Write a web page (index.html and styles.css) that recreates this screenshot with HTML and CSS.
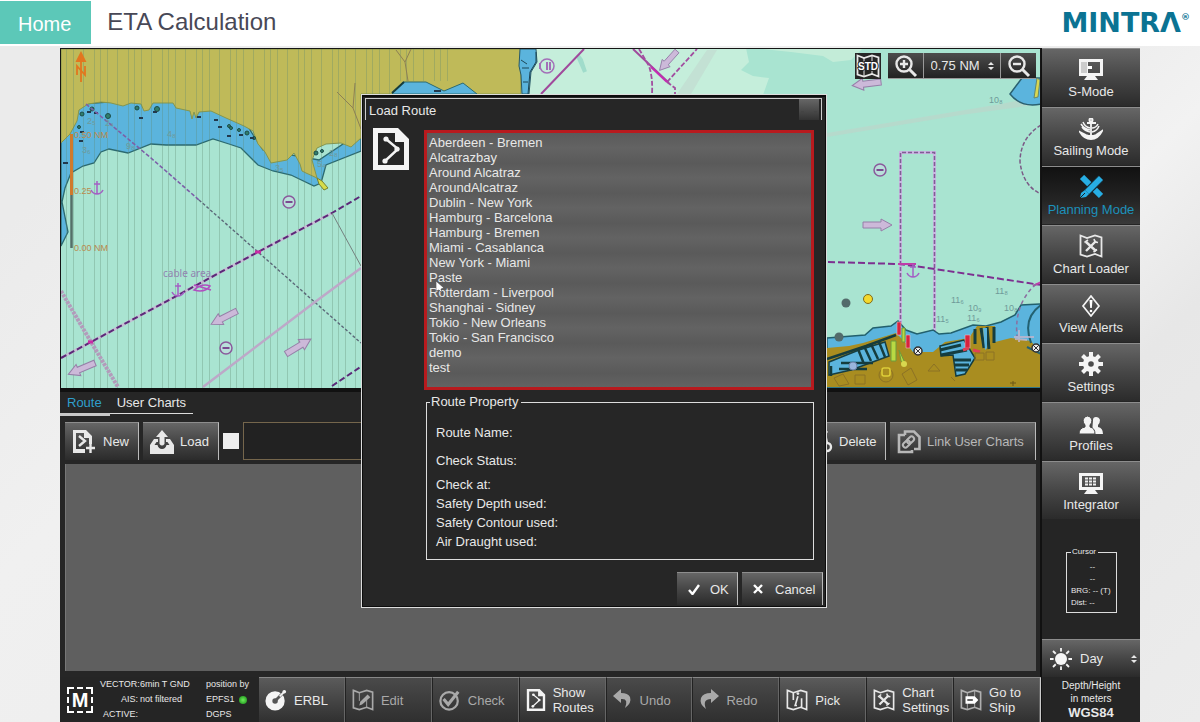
FILE: index.html
```html
<!DOCTYPE html>
<html lang="en">
<head>
<meta charset="utf-8">
<meta name="viewport" content="width=device-width, initial-scale=1">
<title>ETA Calculation</title>
<link rel="stylesheet" href="styles.css">
</head>
<body>
<svg class="defs" aria-hidden="true">
  <symbol id="i-sheet" viewBox="0 0 36 42">
    <path fill="#f4f4f4" fill-rule="evenodd" d="M0 0H25L36 11V42H0ZM5 5V37H31V14H22V5Z"/>
    <path d="M13 11L25 21L12 33" fill="none" stroke="#f4f4f4" stroke-width="2.4"/>
    <circle cx="13" cy="11" r="2.6" fill="#f4f4f4"/><circle cx="24" cy="21" r="2.6" fill="#f4f4f4"/><circle cx="12" cy="33" r="2.6" fill="#f4f4f4"/>
  </symbol>
  <symbol id="i-map" viewBox="0 0 24 24">
    <path d="M1.5 1.5L8 4L16 1.500L22.500 3.500V22.500L16 20L8 22.500L1.500 20.500Z" fill="none" stroke="currentColor" stroke-width="1.800"/>
  </symbol>
  <symbol id="i-tools" viewBox="0 0 24 24">
    <use href="#i-map"/>
    <path d="M7 17L17 7M7 8L17 17" stroke="currentColor" stroke-width="2.400"/>
    <path d="M5.500 8.500L9 6M15 5L16 8L19 8.500M14.500 18L18 15.500" fill="none" stroke="currentColor" stroke-width="1.600"/>
  </symbol>
</svg>

<header class="top">
  <a class="home" href="#">Home</a>
  <h1 class="title">ETA Calculation</h1>
  <div class="brand">MINTRΛ<sup>®</sup></div>
</header>

<main class="app">
  <div class="work">
    <section class="map">
      <svg class="chart" viewBox="60 49 980 339" preserveAspectRatio="xMinYMin slice" role="img" aria-label="Nautical chart">
        <defs>
          <pattern id="lines" width="34" height="40" patternUnits="userSpaceOnUse">
            <path d="M4.500 0V40M14.500 0V40M25.500 0V40M31.500 0V40" stroke="#5d8a72" stroke-opacity=".32"/>
          </pattern>
          <g id="arrow"><path d="M0-3H18V-6L29 0L18 6V3H0Z" fill="#ccb9d9" stroke="#967fa8"/></g>
          <g id="bar"><circle r="6" fill="#b9e0da" stroke="#8a5a9c" stroke-width="1.500"/><path d="M-3.500 0H3.500" stroke="#7a4a90" stroke-width="2"/></g>
          <g id="anchor" fill="none" stroke="#a45fc4" stroke-width="1.500"><path d="M0-7V6M-3-4H3M-6 2Q-4 6 0 6Q4 6 6 2"/></g>
        </defs>
        <rect x="60" y="48" width="980" height="340" fill="#a9e4d1"/>
        <path d="M500 48H745L748 62L740 70L752 76L768 78L762 95H500Z" fill="#c5eedb"/>
        <path d="M752 48H862L850 60L832 62L822 56L790 52Z" fill="#c3ecd8"/>
        <path d="M826 133L1000 104L1040 96V104L960 115L826 137Z" fill="#bcd6cb" opacity=".7"/>
        <path d="M716 50L690 94H676L706 50Z" fill="#c2d8ce" opacity=".6"/>
        <path d="M577 56L584 72L580 60Z" fill="#a0dccb" stroke="#a0dccb" stroke-width="4"/>
        <!-- north-western land and shallows -->
        <path d="M60 135L69 130L80 104L160 98L240 116L262 150L318 160L360 132V151L325 165L320 183L313 186L290 175L272 171L257 165L240 148L228 144L212 139L195 145L165 145L150 144L127 153L108 149L100 152L93 163L82 166L70 173L64 188L61 202L67 232L60 246Z" fill="#5bb4dd" stroke="#2c6a70" stroke-width="1.300"/>
        <path d="M60 49H520V94H360V138L350 147L340 143L325 144L316 148L311 160L316 178L305 173L301 171L299 164L293 153L286 160L270 163L264 152L257 144L252 131L243 126L225 118L210 111L198 112L195 118L193 112L191 119L189 111L175 108L172 103L152 103L148 110L143 111L140 104L130 103L122 106L110 103L100 102L87 104L78 110L76 121L69 134L60 143Z" fill="#bfba59" stroke="#86964e"/>
        <path d="M391 94L402 82H425L443 91L462 83L476 94Z" fill="#5bb4dd" stroke="#2c6a70"/>
        <path d="M391 93L403 82" stroke="#173d3c" stroke-width="2"/>
        <path d="M519 49H535L536 62L530 72L528 94H521L520 75L518 66Z" fill="#5bb4dd" stroke="#2a5965"/>
        <path d="M535 52V62L529 72L527 94M521 68H528M520 60L526 64M522 82H527" fill="none" stroke="#1d4757"/>
        <rect x="60" y="49" width="330" height="339" fill="url(#lines)"/>
        <rect x="390" y="49" width="60" height="32" fill="url(#lines)"/>
        <path d="M336 92L352 108L354 83M352 108L360 129M395 50L404 62L410 49M404 62L407 81" fill="none" stroke="#8d8054"/>
        <path d="M316 178L321 181L327 188L323 190L318 184Z" fill="#d6dc4a" stroke="#77812f"/>
        <g fill="#2f7f6d" stroke="#1d4c48"><circle cx="81" cy="114" r="2"/><circle cx="91" cy="109" r="2"/><circle cx="107" cy="116" r="2.500"/><circle cx="136" cy="108" r="2"/><circle cx="156" cy="109" r="2.500"/><circle cx="78" cy="127" r="1.500"/><circle cx="228" cy="126" r="1.500"/><circle cx="230" cy="128" r="1.500"/><circle cx="238" cy="130" r="1.500"/><circle cx="246" cy="133" r="2"/><circle cx="253" cy="138" r="1.500"/><circle cx="315" cy="153" r="2"/><circle cx="321" cy="151" r="1.500"/></g>
        <path d="M86 112H90M93 113H97M138 118H142M152 112H156M196 117H200M213 120H217M217 127H221M226 136H230M238 135H242M249 138H253M78 141H82M62 163H67M79 132H83M433 91H440" stroke="#22394d" stroke-width="2"/>
        <path d="M85 104L150 158L198 200" fill="none" stroke="#7d5fa8" stroke-width="1.600" stroke-dasharray="4 2"/>
        <path d="M198 200L257 252L360 343" fill="none" stroke="#5b6878" stroke-width="1.400" stroke-dasharray="3 2"/>
        <path d="M60 358L90 342L257 252L331 213" fill="none" stroke="#d9a3d6" stroke-width="3" opacity=".6"/>
        <path d="M60 358L90 342L257 252L331 213L360 196M331 386L361 366" fill="none" stroke="#5b2a78" stroke-width="2" stroke-dasharray="6 3"/>
        <path d="M331 213L360 266" stroke="#75807f"/>
        <path d="M202 387L314 302L360 268" fill="none" stroke="#bda8c8" stroke-width="2.500"/>
        <path d="M60 291L90 342L117 387" stroke="#b39bbb" stroke-width="4" fill="none" stroke-dasharray="3 1"/>
        <path d="M254 252H260M87 342H92" stroke="#c92ba5" stroke-width="3"/>
        <use href="#arrow" transform="translate(236 311) rotate(153)"/>
        <use href="#arrow" transform="translate(285 354) rotate(-31)"/>
        <use href="#arrow" transform="translate(94 363) rotate(157)"/>
        <use href="#bar" x="288" y="202"/><use href="#bar" x="225" y="348"/><use href="#bar" x="879" y="170"/>
        <use href="#anchor" x="96" y="188"/><use href="#anchor" x="177" y="290"/>
        <path d="M193 285L210 290M193 290Q201 283 209 286Q204 293 193 290Z" fill="none" stroke="#b04fc0" stroke-width="1.500"/>
        <g class="chart-note"><text x="162" y="277" fill="#9183b0">cable area</text></g>
        <g class="chart-depth"><text x="86" y="124">2₅</text><text x="104" y="126">2₄</text><text x="81" y="153">3₆</text><text x="125" y="149">9₈</text><text x="166" y="137">4₈</text><text x="274" y="171">3₅</text><text x="328" y="156">2₈</text><text x="316" y="167">5₄</text></g>
        <path d="M70.500 134V195" stroke="#d07a2c" stroke-width="3"/><path d="M70.500 195V248" stroke="#546f68" stroke-width="2.500"/>
        <g class="chart-scale"><text x="73" y="138">0.50 NM</text><text x="73" y="194">0.25</text><text x="73" y="251">0.00 NM</text></g>
        <path d="M80 82V54M76 61L80 53L84 61Z" stroke="#e2761f" stroke-width="1.800" fill="#e2761f"/><path d="M76 75V66L84 75V66" stroke="#e2761f" stroke-width="1.800" fill="none"/>
        <!-- traffic lanes at the top -->
        <path d="M540 94L583 49M632 49L668 83" fill="none" stroke="#a04a9c" stroke-width="2"/>
        <path d="M638 49L648 66Q652 78 651 94M666 82L696 49M666 82L674 88V94" fill="none" stroke="#a24d9f" stroke-width="1.800" stroke-dasharray="5 2"/>
        <path d="M650 67L666 82" stroke="#c42bb2" stroke-width="2"/>
        <use href="#arrow" transform="translate(676 51) rotate(132) scale(.9)"/>
        <circle cx="546" cy="66" r="7" fill="none" stroke="#a36fb8" stroke-width="1.500"/><path d="M539 63V69M546 62V70M549 62V70" stroke="#a36fb8" stroke-width="2"/>
        <!-- eastern waters -->
        <use href="#arrow" transform="translate(880 82) rotate(173)"/>
        <use href="#arrow" x="862" y="225"/>
        <path d="M899.500 325V152.500H933.500V350" fill="none" stroke="#c9b6e2" stroke-width="3"/>
        <path d="M899.500 325V152.500H933.500V350" fill="none" stroke="#7f5d94" stroke-width="1.500" stroke-dasharray="4 2"/>
        <path d="M1040 125Q1019 138 1019 162Q1022 186 1040 194" fill="none" stroke="#7b5a86" stroke-width="1.500" stroke-dasharray="4 2"/>
        <path d="M827 262L898 264L934 269L1040 285" fill="none" stroke="#7d2f90" stroke-width="2" stroke-dasharray="7 3"/>
        <path d="M897 264H915M1032 286L1040 282" stroke="#bf3da9" stroke-width="2"/>
        <use href="#anchor" x="912" y="271"/>
        <path d="M1021 78H1040V104Q1020 108 1009 94Z" fill="#5bb4dd" stroke="#2a6070" stroke-width="1.500"/>
        <path d="M1036 78L1033 98L1037 97L1039 80Z" fill="#d9d750" stroke="#64866a"/>
        <g class="chart-depth"><text x="988" y="103">10₈</text><text x="994" y="294">11₈</text><text x="950" y="303">11₆</text><text x="967" y="311">10₉</text><text x="966" y="321">11₆</text><text x="935" y="322">11₅</text><text x="1003" y="311">10₈</text></g>
        <!-- southern harbour -->
        <path d="M826 338L864 335L872 328L890 326L897 321L905 330L916 334L932 330L938 334L950 333L972 325L985 326L1000 322L1014 315L1020 305L1040 304V388H826Z" fill="#5bb4dd" stroke="#22606d" stroke-width="1.500"/>
        <path d="M826 348L848 346L862 343L895 333L905 343L912 352L932 352L944 342L968 338L976 326H994V342L1010 338L1030 341L1040 354V387H826Z" fill="#a98d20"/>
        <path d="M828 362L858 350L884 342L888 356L850 370L828 375Z" fill="#5bb4dd" stroke="#173e42" stroke-width="1.500"/>
        <path d="M826 359L865 346L895 335M857 349L863 364M863 346L870 361M870 344L877 359M878 342L884 357M840 363H872M838 369H866M830 366V376" fill="none" stroke="#153c3d" stroke-width="2.500"/>
        <path d="M939 346L963 340L974 358L964 374L955 376L952 355L940 356Z" fill="#5bb4dd" stroke="#153c3d" stroke-width="1.500"/>
        <path d="M939 350L960 345M940 355L966 350M953 360H970M954 365H968M955 370H966M974 329V344M980 328L983 348M986 327L988 349M993 327V343" stroke="#143d40" stroke-width="3"/>
        <path d="M982 328H986V348L984 350Z" fill="#5bb4dd"/>
        <path d="M1040 305Q1021 318 1030 343M1026 347L1040 354" fill="none" stroke="#236171" stroke-width="2"/>
        <path d="M1035 284Q1013 304 1016 336" fill="none" stroke="#8b6ea0" stroke-width="1.500" stroke-dasharray="4 3"/>
        <path d="M896 322H900V335H896ZM905 335H909V348H905ZM964 335H969V348H964Z" fill="#d8233c" stroke="#e5bcc6" stroke-width=".6"/>
        <path d="M901 328H904V342H901ZM890 341H895V361H890ZM898 350L905 365L900 361Z" fill="#b9d943" stroke="#6d9b3a"/>
        <circle cx="903" cy="364" r="3" fill="#d8d84e"/><circle cx="845" cy="303" r="4.500" fill="#536b6b"/><circle cx="838" cy="337" r="4.500" fill="#536b6b"/>
        <circle cx="867" cy="299" r="4.500" fill="#f3d92e" stroke="#806b1b"/>
        <g fill="#eee" stroke="#333" stroke-width="1.500"><circle cx="917" cy="351" r="4"/><circle cx="1035" cy="348" r="4"/></g>
        <path d="M914 348L920 354M920 348L914 354M1032 345L1038 351M1038 345L1032 351" stroke="#333"/>
        <circle cx="852" cy="366" r="4" fill="#9ab6dc" stroke="#6c83a9"/>
        <path d="M1013 337H1033M1018 330V342M1014 339L1026 340" stroke="#c4b6ce" stroke-width="2" opacity=".8"/>
        <path d="M972 350L979 352M962 350L968 348" stroke="#df4055" stroke-width="3"/>
        <g fill="none" stroke="#8c7225"><path d="M833 378L842 374L848 384L838 386ZM854 375H864V384H854ZM901 374L910 368L916 380L907 385ZM927 371L933 364L939 371ZM974 353H983V360H974ZM985 352H993V360H985ZM950 377L954 381"/><circle cx="885" cy="375" r="7"/></g>
        <rect x="881" y="368" width="8" height="8" rx="2" fill="none" stroke="#dfcf38" stroke-width="1.500"/>
        <path d="M1012 381V386M1009 383H1015" stroke="#6b5617"/>
      </svg>
      <div class="map-tools">
        <button class="std" aria-label="Standard chart display"><svg width="24" height="24" viewBox="0 0 24 24"><use href="#i-map"/><path d="M8 4V22M16 2V20" stroke="currentColor"/><text x="12" y="16" text-anchor="middle" class="std-text">STD</text></svg></button>
        <div class="zoom">
          <button class="zoom-btn" aria-label="Zoom in"><svg width="24" height="24" viewBox="0 0 24 24" fill="none" stroke="currentColor" stroke-width="2.400"><circle cx="10" cy="10" r="7.500"/><path d="M15.500 15.500L22 22" stroke-width="3"/><path d="M6 10H14M10 6V14"/></svg></button>
          <label class="scale"><select aria-label="Chart range"><option>0.75 NM</option></select><svg class="updown" width="6" height="8" viewBox="0 0 6 8"><path d="M0 3L3 0L6 3ZM0 5H6L3 8Z" fill="currentColor"/></svg></label>
          <button class="zoom-btn" aria-label="Zoom out"><svg width="24" height="24" viewBox="0 0 24 24" fill="none" stroke="currentColor" stroke-width="2.400"><circle cx="10" cy="10" r="7.500"/><path d="M15.500 15.500L22 22" stroke-width="3"/><path d="M6 10H14"/></svg></button>
        </div>
      </div>
    </section>

    <section class="routes">
      <nav class="tabs">
        <button class="tab tab-on">Route</button>
        <button class="tab">User Charts</button>
      </nav>
      <div class="toolbar">
        <button class="btn btn-new"><svg width="24" height="25" viewBox="0 0 24 25"><path fill="currentColor" fill-rule="evenodd" d="M1 1H14L20 7V15H17V9H12V4H4V20H13V24H1Z"/><path d="M7 7L13 12L7 17M14 19H23M18.500 14V24" fill="none" stroke="currentColor" stroke-width="2.400"/></svg>New</button>
        <button class="btn btn-load"><svg width="24" height="24" viewBox="0 0 24 24" fill="currentColor"><path d="M0 15L4 9H8V12H6.500L4.500 15H7.500Q8.500 19 12 19T16.500 15H19.500L17.500 12H16V9H20L24 15V24H0Z"/><path d="M12 0L18 7H14.500V14Q12 17 9.500 14V7H6Z"/></svg>Load</button>
        <input class="check" type="checkbox" aria-label="Lock route">
        <input class="route-name" type="text" aria-label="Route name">
        <button class="btn btn-delete"><svg width="24" height="24" viewBox="0 0 24 24" fill="none" stroke="currentColor" stroke-width="2.400"><path d="M4 3V20H12M10 13L18 1"/><circle cx="18" cy="17" r="4"/><path d="M16 4L18 13"/></svg>Delete</button>
        <button class="btn btn-link"><svg width="24" height="24" viewBox="0 0 24 24" fill="none" stroke="currentColor"><path d="M8 5H2V22H15V20M8 5V1.500H17L22.500 7V19H17" stroke-width="2.600"/><g stroke-width="2"><rect x="11" y="6" width="5" height="8" rx="2.500" transform="rotate(45 13.500 10)"/><rect x="7" y="10" width="5" height="8" rx="2.500" transform="rotate(45 9.500 14)"/></g></svg>Link User Charts</button>
      </div>
      <div class="panel"></div>
    </section>

    <footer class="bottom">
      <div class="status">
        <svg width="26" height="26" viewBox="0 0 26 26"><path d="M1 7V1H7M10 1H16M19 1H25V7M25 10V16M25 19V25H19M16 25H10M7 25H1V19M1 16V10" fill="none" stroke="#fff" stroke-width="2"/><text x="13" y="20" text-anchor="middle" class="m-text">M</text></svg>
        <dl class="vector">
          <dt>VECTOR:</dt><dd>6min T GND</dd>
          <dt>AIS:</dt><dd>not filtered</dd>
          <dt>ACTIVE:</dt><dd></dd>
        </dl>
        <div class="fix">position by<br>EPFS1 <span class="led"></span><br>DGPS</div>
      </div>
      <div class="actions">
        <button class="act"><svg width="22" height="24" viewBox="0 0 24 24"><circle cx="11" cy="13" r="10.500" fill="#f4f4f4"/><circle cx="11" cy="13" r="3" fill="#555"/><path d="M11 13L22 2" stroke="#555" stroke-width="3"/><path d="M16 8L22 2" stroke="#f4f4f4" stroke-width="2"/><circle cx="21" cy="3" r="2" fill="#f4f4f4"/></svg>ERBL</button>
        <button class="act dim"><svg width="22" height="24" viewBox="0 0 24 24"><use href="#i-map"/><path d="M8 18L9 14L17 6L20 9L11 17Z" fill="currentColor"/><path d="M8 4V13M16 12V20" stroke="currentColor"/></svg>Edit</button>
        <button class="act dim"><svg width="22" height="24" viewBox="0 0 24 24" fill="none" stroke="currentColor" stroke-width="2.400"><circle cx="11" cy="13" r="9.500"/><path d="M5 11L10 17L21 3" stroke-width="3.400"/></svg>Check</button>
        <button class="act lit"><svg width="20" height="22" viewBox="0 0 36 42"><use href="#i-sheet"/></svg><span>Show<br>Routes</span></button>
        <button class="act dim"><svg width="20" height="22" viewBox="0 0 20 22"><path d="M8 0L0 7L8 14V10Q16 9 12 19Q19 14 17 8Q15 4 8 4Z" fill="currentColor"/></svg>Undo</button>
        <button class="act dim"><svg width="20" height="22" viewBox="0 0 20 22"><path d="M12 0L20 7L12 14V10Q3 10 7 20Q0 15 2 9Q4 4 12 4Z" fill="currentColor"/></svg>Redo</button>
        <button class="act lit"><svg width="22" height="24" viewBox="0 0 24 24"><use href="#i-map"/><path d="M13 8L10 18L12 18M8 4V12M17 10V20" fill="none" stroke="currentColor" stroke-width="1.800"/><circle cx="13" cy="5" r="1.500" fill="currentColor"/></svg>Pick</button>
        <button class="act lit"><svg width="22" height="24" viewBox="0 0 24 24"><use href="#i-tools"/></svg><span>Chart<br>Settings</span></button>
        <button class="act lit"><svg width="22" height="24" viewBox="0 0 24 24"><g opacity=".65"><use href="#i-map"/><path d="M8 4V22M16 2V20" stroke="currentColor"/></g><path d="M6 8H16L20 12L16 16H6Z" fill="#fff"/><path d="M8 12H14" stroke="#555" stroke-width="2"/></svg><span>Go to<br>Ship</span></button>
      </div>
    </footer>
  </div>

  <aside class="side">
    <button class="mode"><svg width="24" height="22" viewBox="0 0 24 22"><path fill="#f4f4f4" fill-rule="evenodd" d="M0 0H24V17H16L19 21H5L8 17H0ZM9 3V14H21V3Z"/><path d="M2 3H8V14H2Z" fill="#ccc"/><path d="M9 8.500H13" stroke="#fff" stroke-width="3"/></svg>S-Mode</button>
    <button class="mode"><svg width="24" height="22" viewBox="0 0 24 22" fill="none" stroke="#f4f4f4"><path d="M12 3V20M8 5H17M1 14L7 17Q12 19 17 17L23 13Q19 21 12 21T1 14Z" fill="#f4f4f4" stroke-width="1.800"/><circle cx="12" cy="2" r="1.500" stroke-width="2"/><path d="M3 9Q6 13 11 14M4 4Q6 9 11 10M20 8Q18 13 13 14M2 6Q5 11 11 12M13 10Q17 10 19 6" stroke-width="1.500"/></svg>Sailing Mode</button>
    <button class="mode mode-on"><svg width="24" height="24" viewBox="0 0 24 24"><path d="M3 2L22 21" stroke="#27aee4" stroke-width="6"/><path d="M22 3L7 18" stroke="#172a33" stroke-width="8"/><path d="M20 1L24 5L10 19L6 15Z" fill="#27aee4"/><path d="M6 15L10 19L7 22L1 23L2 18Z" fill="#27aee4"/><path d="M1 23L6 18" stroke="#1d1d1d"/></svg>Planning Mode</button>
    <button class="mode"><svg width="24" height="24"><use href="#i-tools"/></svg>Chart Loader</button>
    <button class="mode"><svg width="20" height="22" viewBox="0 0 20 22"><path d="M10 1L18 11L10 21L2 11Z" fill="none" stroke="#f4f4f4" stroke-width="1.700"/><path d="M8.500 5H11.500L10.800 13H9.200Z" fill="#fff"/><circle cx="10" cy="16" r="1.300" fill="#fff"/></svg>View Alerts</button>
    <button class="mode"><svg width="24" height="24" viewBox="0 0 24 24"><path d="M12 0V24M0 12H24M3.500 3.500L20.500 20.500M20.500 3.500L3.500 20.500" stroke="#f4f4f4" stroke-width="4"/><circle cx="12" cy="12" r="8" fill="#f4f4f4"/><circle cx="12" cy="12" r="2.800" fill="#4a4a4a"/></svg>Settings</button>
    <button class="mode"><svg width="24" height="19" viewBox="0 0 24 19" fill="#f4f4f4"><path d="M13 18H24Q24 12 19 11V9Q21 7 21 4Q20 1 17 1Q14 1 14 4Z"/><path d="M0 18Q0 12 6 11V9Q4 7 4 4Q5 0 8.500 0T13 4Q13 7 11 9V11Q16 12 16 18Z" stroke="#444"/></svg>Profiles</button>
    <button class="mode"><svg width="24" height="21" viewBox="0 0 24 21"><path fill="#f4f4f4" fill-rule="evenodd" d="M0 0H24V17H16L19 21H5L8 17H0ZM3 3V14H21V3Z"/><path d="M6 5.500H18M6 8.500H18M6 11.500H18" stroke="#eee" stroke-width="2" stroke-dasharray="3 1"/></svg>Integrator</button>
    <div class="cursor-area">
      <fieldset class="cursor-box"><legend>Cursor</legend>
        <div class="mid">--</div><div class="mid">--</div><div>BRG: -- (T)</div><div>Dist: --</div>
      </fieldset>
    </div>
    <label class="day"><svg width="22" height="22" viewBox="0 0 22 22"><path d="M11 0V22M0 11H22M3 3L19 19M19 3L3 19" stroke="#f4f4f4" stroke-width="1.800"/><circle cx="11" cy="11" r="7.500" fill="#484848"/><circle cx="11" cy="11" r="6" fill="#f6f6f6"/></svg><select aria-label="Palette"><option>Day</option></select><svg class="updown" width="6" height="8" viewBox="0 0 6 8"><path d="M0 3L3 0L6 3ZM0 5H6L3 8Z" fill="currentColor"/></svg></label>
    <div class="datum">Depth/Height<br>in meters<strong>WGS84</strong></div>
  </aside>

  <section class="dialog" role="dialog" aria-labelledby="dlg">
    <header class="dlg-head"><h2 id="dlg">Load Route</h2><button class="dlg-close" aria-label="Close"></button></header>
    <div class="dlg-body">
      <svg class="dlg-icon" width="36" height="42"><use href="#i-sheet"/></svg>
      <div class="dlg-main">
        <select class="list" size="16" aria-label="Routes">
          <option>Aberdeen - Bremen</option><option>Alcatrazbay</option><option>Around Alcatraz</option><option>AroundAlcatraz</option><option>Dublin - New York</option><option>Hamburg - Barcelona</option><option>Hamburg - Bremen</option><option>Miami - Casablanca</option><option>New York - Miami</option><option>Paste</option><option>Rotterdam - Liverpool</option><option>Shanghai - Sidney</option><option>Tokio - New Orleans</option><option>Tokio - San Francisco</option><option>demo</option><option>test</option>
        </select>
        <fieldset class="props"><legend>Route Property</legend>
          <div class="prop tall">Route Name:</div>
          <div class="prop tall">Check Status:</div>
          <div class="prop">Check at:</div>
          <div class="prop">Safety Depth used:</div>
          <div class="prop">Safety Contour used:</div>
          <div class="prop">Air Draught used:</div>
        </fieldset>
      </div>
    </div>
    <div class="dlg-foot">
      <button class="btn btn-ok"><svg width="12" height="11" viewBox="0 0 12 11"><path d="M1 6L4.500 10L11 1" fill="none" stroke="#fff" stroke-width="2.400"/></svg>OK</button>
      <button class="btn btn-cancel"><svg width="10" height="10" viewBox="0 0 10 10"><path d="M1 1L9 9M9 1L1 9" stroke="#fff" stroke-width="2.400"/></svg>Cancel</button>
    </div>
    <svg class="pointer" width="8" height="12" viewBox="0 0 8 12"><path d="M0 0L8 7L5 8L6 12L3 9L0 10Z" fill="#fff" stroke="#444" stroke-width=".6"/></svg>
  </section>
</main>
</body>
</html>
```
FILE: styles.css
```css
* { box-sizing: border-box; }
body {
  margin: 0;
  min-height: 100vh;
  display: flex;
  flex-direction: column;
  font-family: "Liberation Sans", Arial, sans-serif;
  font-size: 13px;
  color: #e8e8e8;
  background: linear-gradient(135deg, #ebebeb 0 12%, #f0f0f0 30%, #ededed 60%, #f2f2f2 68%, #e7e7e7 78%, #ececec 100%);
}
button, select, input { font: inherit; color: inherit; }
button { border: 0; padding: 0; background: none; cursor: pointer; }
h1, h2, dl, dd { margin: 0; font-weight: normal; }
svg { display: block; flex: none; }
.defs { position: absolute; width: 0; height: 0; }

.top { display: flex; align-items: center; height: 46px; background: #fff; color: #484856; }
.home { align-self: stretch; margin: 1px 0 2px; padding: 0 20px 0 18px; line-height: 46px; font-size: 20px; color: #fff; background: #5cc8b8; text-decoration: none; }
.title { padding-left: 16px; margin-bottom: 2px; font-size: 24px; line-height: 28px; }
.brand { margin-left: auto; padding-right: 10px; font: bold 27px/30px "DejaVu Sans", sans-serif; color: #0b7393; }
.brand sup { font-size: 9px; line-height: 10px; vertical-align: 12px; }

.app { position: relative; flex: 1; display: flex; margin: 2px 60px 0; background: #252525; }
.work { flex: 1; min-width: 0; display: flex; flex-direction: column; }
.side { width: 99px; display: flex; flex-direction: column; border-left: 1px solid #111; }

.map { position: relative; height: 340px; border: 1px solid #151515; border-width: 1px 1px 0; }
.chart { width: 100%; height: 100%; }
.chart-note, .chart-scale { font-size: 10px; }
.chart-note { font-family: "Noto Sans", sans-serif; }
.chart-scale { font-size: 9px; fill: #b98a4d; }
.chart-depth { font-size: 9px; fill: #6f9a99; }
.map-tools { position: absolute; top: 4px; right: 4px; display: flex; gap: 7px; }
.std { width: 26px; height: 26px; display: grid; place-items: center; background: #262626; }
.std-text { font-size: 10px; font-weight: bold; fill: #fff; stroke: #262626; stroke-width: 2px; paint-order: stroke; }
.zoom { display: flex; gap: 1px; background: #999; }
.zoom-btn, .scale { display: grid; place-items: center; width: 35px; height: 25px; background: linear-gradient(#4c4c4c, #222); }
.scale { display: flex; justify-content: center; gap: 7px; width: 76px; }
.scale select, .day select { appearance: none; border: 0; padding: 0; background: transparent; }

.routes { flex: 1; display: flex; flex-direction: column; padding: 2px 4px 0 5px; border-top: 4px solid #111; border-right: 1px solid #111; background: #262626; }
.tabs { display: flex; align-items: flex-start; margin-left: -5px; }
.tab { height: 20px; padding: 0 7px 2px; border-bottom: 1px solid #ddd; }
.tab-on { height: 22px; padding: 0 8px 2px 7px; color: #2f9fcb; border-bottom: 3px solid #c8c8c8; }
.toolbar { display: flex; align-items: center; gap: 4px; margin: 6px 0 4px; }
.btn, .mode, .day { background: linear-gradient(#666, #464646 50%, #2b2b2b); border-top: 1px solid #8d8d8d; }
.btn { display: flex; align-items: center; height: 38px; border-right: 1px solid #bbb; }
.btn-new { width: 74px; padding-left: 7px; gap: 7px; }
.btn-load { width: 76px; padding-left: 7px; gap: 6px; }
.check { appearance: none; width: 16px; height: 16px; margin: 0; background: #eee; }
.route-name { flex: 1; min-width: 0; height: 38px; border: 1px solid #75664c; background: #222; }
.btn-delete { width: 78px; padding-left: 1px; gap: 6px; }
.btn-link { width: 146px; padding-left: 7px; gap: 6px; color: #b8b8b8; }
.panel { flex: 1; background: #5f5f5f; margin-bottom: 6px; border-left: 1px solid #777; }

.bottom { display: flex; height: 45px; background: #252525; }
.status { display: flex; width: 199px; padding: 0 0 0 7px; align-items: center; font-size: 9px; line-height: 15px; }
.m-text { font-size: 20px; font-weight: bold; fill: #fff; }
.vector { display: grid; grid-template-columns: 38px auto; column-gap: 2px; padding-left: 7px; grid-auto-rows: 15px; white-space: nowrap; }
.vector dt { text-align: right; }
.fix { margin-left: auto; padding-right: 10px; white-space: nowrap; }
.led { display: inline-block; width: 8px; height: 8px; margin-left: 2px; border-radius: 50%; background: radial-gradient(#6fec5c, #138a13); vertical-align: -2px; }
.actions { flex: 1; display: grid; grid-template-columns: repeat(9, 1fr); }
.act { display: flex; align-items: center; gap: 7px; padding-left: 6px; text-align: left; line-height: 15px; white-space: nowrap; background: linear-gradient(#5b5b5b, #303030); border-top: 1px solid #888; border-right: 1px solid #222; box-shadow: inset -1px 0 #666; }
.act.dim { color: #a9a9a9; background: linear-gradient(#4a4a4a, #2f2f2f); }
.act:last-child { border-right-color: #ccc; }

.mode { display: flex; flex-direction: column; align-items: center; justify-content: flex-end; gap: 3px; height: 58px; margin-bottom: 1px; padding-bottom: 7px; line-height: 15px; }
.mode-on { color: #1c91bb; background: linear-gradient(#111, #252525 60%, #3a3a3a); }
.cursor-area { flex: 1; padding: 27px 23px 0 24px; font-size: 8px; line-height: 12px; }
.cursor-box { margin: 0; padding: 4px 2px 3px 4px; border: 1px solid #ddd; white-space: nowrap; min-width: 0; }
.cursor-box legend { padding: 0 2px 0 1px; line-height: 10px; }
.mid { text-align: center; }
.day { display: flex; align-items: center; height: 38px; padding: 0 3px 0 8px; }
.day select { flex: 1; min-width: 0; padding-left: 8px; }
.datum { height: 45px; padding-top: 2px; text-align: center; font-size: 10px; line-height: 13px; }
.datum strong { display: block; font-size: 13px; line-height: 15px; }

.dialog { position: absolute; left: 301px; top: 46px; width: 466px; padding: 3px 2px 2px 3px; background: #262626; border: 1px solid #ddd; box-shadow: inset 0 0 0 1px #0c0c0c, inset 0 2px #0c0c0c; }
.dlg-head { display: flex; justify-content: space-between; height: 22px; margin-right: 2px; padding-left: 3px; border: solid #ccc; border-width: 1px 1px 0; }
.dlg-head h2 { font-size: 13px; line-height: 23px; }
.dlg-close { width: 20px; margin-right: 2px; background: linear-gradient(#666, #333); }
.dlg-close::before { content: ""; display: block; width: 10px; height: 2px; margin: 4px auto 0; border: solid #444; border-width: 0 3px; }
.dlg-body { display: flex; gap: 15px; padding: 8px 10px 0 8px; align-items: flex-start; }
.dlg-main { flex: 1; padding-top: 2px; }
.list { appearance: none; display: block; width: 100%; height: 260px; padding: 2px 0; overflow: hidden; border: 3px solid #b81a1e; border-radius: 0; outline: 0; background: repeating-linear-gradient(#5a5a5a 0, #636363 15px, #5a5a5a 30px); }
.list option { height: 15px; min-height: 0; padding: 0 2px; line-height: 15px; }
.props { margin: 4px 0 0 2px; padding: 9px 9px 8px; border: 1px solid #ddd; }
.props legend { margin-left: -6px; padding: 0 3px 0 1px; line-height: 16px; }
.prop { line-height: 19px; }
.tall { line-height: 28px; }
.dlg-foot { display: flex; justify-content: flex-end; gap: 4px; margin-top: 12px; padding-right: 1px; }
.dlg-foot .btn { height: 33px; }
.btn-ok { width: 61px; padding-left: 11px; gap: 10px; }
.btn-cancel { width: 81px; padding-left: 11px; gap: 12px; }
.pointer { position: absolute; left: 74px; top: 186px; }
```
